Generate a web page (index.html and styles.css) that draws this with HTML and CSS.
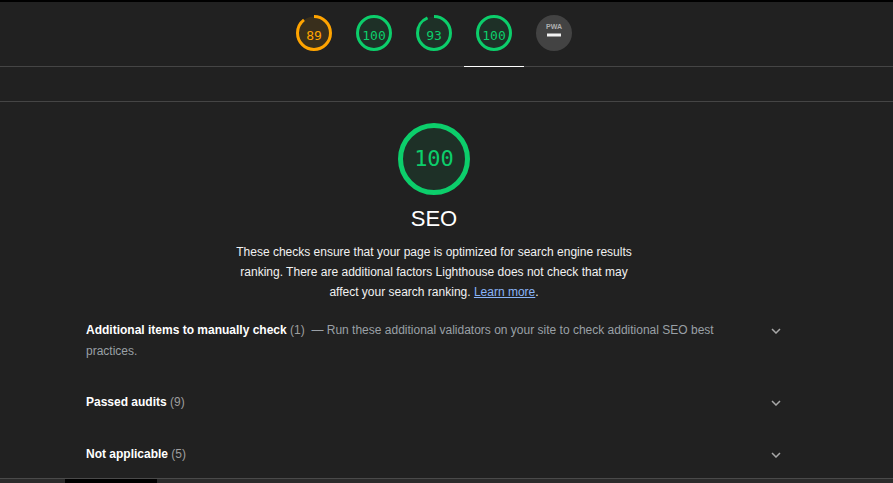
FILE: index.html
```html
<!DOCTYPE html>
<html lang="en">
<head>
<meta charset="utf-8">
<title>Lighthouse SEO</title>
<link rel="stylesheet" href="styles.css">
</head>
<body>
<div class="topline"></div>
<header class="sticky">
  <nav class="gauges">
    <a class="gauge-link">
      <svg class="gauge-svg" width="36" height="36" viewBox="0 0 36 36">
        <circle class="fill-orange" cx="18" cy="18" r="16.5"></circle>
        <circle class="arc-orange" cx="18" cy="18" r="16.5" stroke-dasharray="92.27 103.67" transform="rotate(-90 18 18)"></circle>
      </svg>
      <span class="gauge-num orange">89</span>
    </a>
    <a class="gauge-link">
      <svg class="gauge-svg" width="36" height="36" viewBox="0 0 36 36">
        <circle class="fill-green" cx="18" cy="18" r="16.5"></circle>
        <circle class="arc-green" cx="18" cy="18" r="16.5" stroke-dasharray="103.67 103.67" transform="rotate(-90 18 18)"></circle>
      </svg>
      <span class="gauge-num green">100</span>
    </a>
    <a class="gauge-link">
      <svg class="gauge-svg" width="36" height="36" viewBox="0 0 36 36">
        <circle class="fill-green" cx="18" cy="18" r="16.5"></circle>
        <circle class="arc-green" cx="18" cy="18" r="16.5" stroke-dasharray="96.41 103.67" transform="rotate(-90 18 18)"></circle>
      </svg>
      <span class="gauge-num green">93</span>
    </a>
    <a class="gauge-link active">
      <svg class="gauge-svg" width="36" height="36" viewBox="0 0 36 36">
        <circle class="fill-green" cx="18" cy="18" r="16.5"></circle>
        <circle class="arc-green" cx="18" cy="18" r="16.5" stroke-dasharray="103.67 103.67" transform="rotate(-90 18 18)"></circle>
      </svg>
      <span class="gauge-num green">100</span>
    </a>
    <a class="gauge-link">
      <svg class="gauge-svg" width="36" height="36" viewBox="0 0 36 36">
        <circle cx="18" cy="18" r="18" fill="#434343"></circle>
        <text x="18" y="14" text-anchor="middle" class="pwa-text">PWA</text>
        <rect x="11" y="18.5" width="14" height="3" fill="#f2f2f2"></rect>
      </svg>
    </a>
  </nav>
</header>
<div class="spacer"></div>
<main class="content">
  <section class="category">
    <div class="big-gauge">
      <svg width="72" height="72" viewBox="0 0 72 72">
        <circle class="fill-green" cx="36" cy="36" r="33.5"></circle>
        <circle class="big-arc" cx="36" cy="36" r="33.5"></circle>
      </svg>
      <span class="big-num">100</span>
    </div>
    <h2 class="cat-title">SEO</h2>
    <p class="cat-desc">These checks ensure that your page is optimized for search engine results ranking. There are additional factors Lighthouse does not check that may affect your search ranking. <a class="link">Learn more</a>.</p>
  </section>
  <div class="groups">
    <div class="group first">
      <div class="group-text"><span class="g-title">Additional items to manually check</span> <span class="g-count">(1)</span> <span class="g-desc">&nbsp;— Run these additional validators on your site to check additional SEO best practices.</span></div>
      <svg class="chev" width="10" height="6" viewBox="0 0 10 6"><path d="M1 1l4 4 4-4" fill="none" stroke="#a8a8a8" stroke-width="1.5"/></svg>
    </div>
    <div class="group">
      <div class="group-text"><span class="g-title">Passed audits</span> <span class="g-count">(9)</span></div>
      <svg class="chev" width="10" height="6" viewBox="0 0 10 6"><path d="M1 1l4 4 4-4" fill="none" stroke="#a8a8a8" stroke-width="1.5"/></svg>
    </div>
    <div class="group last">
      <div class="group-text"><span class="g-title">Not applicable</span> <span class="g-count">(5)</span></div>
      <svg class="chev" width="10" height="6" viewBox="0 0 10 6"><path d="M1 1l4 4 4-4" fill="none" stroke="#a8a8a8" stroke-width="1.5"/></svg>
    </div>
  </div>
</main>
<div class="bottombar"><div class="bottom-thumb"></div></div>
</body>
</html>
```

FILE: styles.css
```css
html, body {
  margin: 0;
  padding: 0;
}
body {
  background: #212121;
  width: 893px;
  height: 483px;
  overflow: hidden;
  font-family: "Liberation Sans", Arial, sans-serif;
  color: #e8eaed;
}
.topline {
  height: 2px;
  background: #000;
}
.sticky {
  height: 64px;
  border-bottom: 1px solid #454545;
}
.gauges {
  width: 868px;
  height: 64px;
  display: flex;
  justify-content: center;
}
.gauge-link {
  width: 60px;
  box-sizing: border-box;
  border-bottom: 1px solid transparent;
  margin-bottom: -1px;
  height: 65px;
  display: flex;
  align-items: center;
  justify-content: center;
  position: relative;
  padding-bottom: 2px;
}
.gauge-link.active {
  border-bottom-color: #ffffff;
}
.gauge-svg {
  display: block;
}
.fill-orange { fill: #392f1c; }
.fill-green { fill: #1e3027; }
.arc-orange {
  fill: none;
  stroke: #ffa400;
  stroke-width: 3;
}
.arc-green {
  fill: none;
  stroke: #0cce6b;
  stroke-width: 3;
}
.gauge-num {
  position: absolute;
  left: 0;
  right: 0;
  top: 25px;
  text-align: center;
  font-family: "DejaVu Sans Mono", "Liberation Mono", monospace;
  font-size: 13px;
  line-height: 18px;
}
.orange { color: #ffa400; }
.green { color: #0cce6b; }
.pwa-text {
  font-family: "Liberation Sans", Arial, sans-serif;
  font-size: 7px;
  font-weight: bold;
  fill: #b0b0b0;
}
.spacer {
  height: 34px;
  border-bottom: 1px solid #454545;
}
.content {
  width: 868px;
}
.category {
  display: flex;
  flex-direction: column;
  align-items: center;
  padding-top: 21px;
}
.big-gauge {
  position: relative;
  width: 72px;
  height: 72px;
}
.big-gauge svg {
  display: block;
}
.big-arc {
  fill: none;
  stroke: #0cce6b;
  stroke-width: 5;
}
.big-num {
  position: absolute;
  left: 0;
  right: 0;
  top: 22px;
  text-align: center;
  font-family: "DejaVu Sans Mono", "Liberation Mono", monospace;
  font-size: 22px;
  line-height: 28px;
  color: #0cce6b;
}
.cat-title {
  margin: 10px 0 0;
  font-size: 22px;
  font-weight: normal;
  line-height: 28px;
  color: #ffffff;
}
.cat-desc {
  margin: 9px 0 0;
  width: 405px;
  text-align: center;
  font-size: 12px;
  line-height: 20px;
  color: #f1f1f1;
}
.link {
  color: #8ab4f8;
  text-decoration: underline;
}
.groups {
  margin: 2.5px 86px 0;
}
.group {
  display: flex;
  justify-content: space-between;
  align-items: flex-start;
  padding: 15px 0;
  font-size: 12px;
  line-height: 21px;
}
.group.first {
  padding-bottom: 15.5px;
}
.group.last {
  padding-top: 15.5px;
  padding-bottom: 13px;
}
.group-text {
  flex: 1;
  padding-right: 44px;
}
.g-title {
  font-weight: bold;
  color: #ffffff;
}
.g-count {
  color: #9e9e9e;
}
.g-desc {
  color: #9aa0a6;
}
.chev {
  margin-top: 8px;
  margin-right: 1px;
  display: block;
}
.bottombar {
  height: 5px;
  border-top: 1px solid #4a4a4a;
  background: #2b2b2b;
}
.bottom-thumb {
  margin-left: 65px;
  width: 92px;
  height: 5px;
  background: #000;
}
```
